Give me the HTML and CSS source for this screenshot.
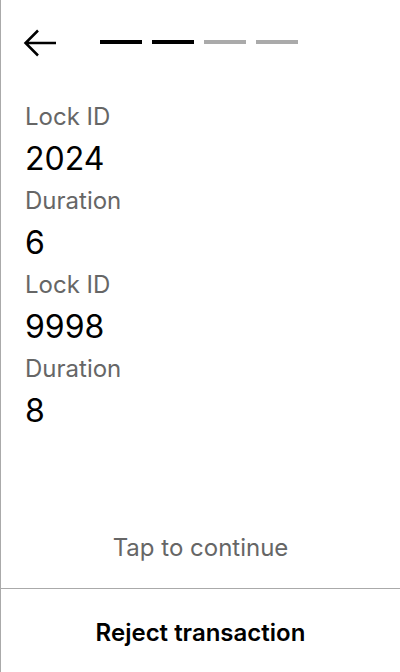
FILE: index.html
```html
<!DOCTYPE html>
<html>
<head>
<meta charset="utf-8">
<link rel="stylesheet" href="styles.css">
</head>
<body>
<div class="screen">
  <header class="top">
    <svg class="back" width="34" height="28" viewBox="0 0 34 28">
      <path d="M2 14 H33 M15 1.5 L2.5 14 L15 26.5" fill="none" stroke="#000" stroke-width="2.5"/>
    </svg>
    <div class="steps">
      <span class="step on"></span>
      <span class="step on"></span>
      <span class="step"></span>
      <span class="step"></span>
    </div>
  </header>
  <main class="fields">
    <div class="label">Lock ID</div>
    <div class="value">2024</div>
    <div class="label">Duration</div>
    <div class="value">6</div>
    <div class="label">Lock ID</div>
    <div class="value">9998</div>
    <div class="label">Duration</div>
    <div class="value">8</div>
  </main>
  <div class="tap">Tap to continue</div>
  <footer class="reject">Reject transaction</footer>
</div>
</body>
</html>
```
FILE: styles.css
```css
html, body {
  margin: 0;
  padding: 0;
  background: #fff;
}
body {
  font-family: Inter, "Noto Sans", sans-serif;
  color: #000;
}
.screen {
  height: 672px;
  box-sizing: border-box;
  border-left: 1px solid #aaa;
  display: flex;
  flex-direction: column;
}
.top {
  height: 86px;
  flex: none;
  display: flex;
  align-items: center;
  padding-left: 22px;
}
.back {
  display: block;
}
.steps {
  display: flex;
  gap: 10px;
  margin-left: 43px;
  margin-top: -2px;
}
.step {
  width: 42px;
  height: 4px;
  background: #aaa;
}
.step.on {
  background: #000;
}
.fields {
  padding-left: 24px;
  padding-top: 12px;
  flex: 1;
}
.label {
  font-size: 24px;
  line-height: 38px;
  color: #666;
}
.value {
  font-size: 32px;
  line-height: 46px;
}
.tap {
  text-align: center;
  font-size: 24px;
  line-height: 29px;
  color: #666;
  padding-bottom: 26px;
}
.reject {
  border-top: 1px solid #aaa;
  height: 84px;
  box-sizing: border-box;
  padding-top: 3px;
  flex: none;
  display: flex;
  align-items: center;
  justify-content: center;
  font-size: 24px;
  font-weight: 600;
}
```
